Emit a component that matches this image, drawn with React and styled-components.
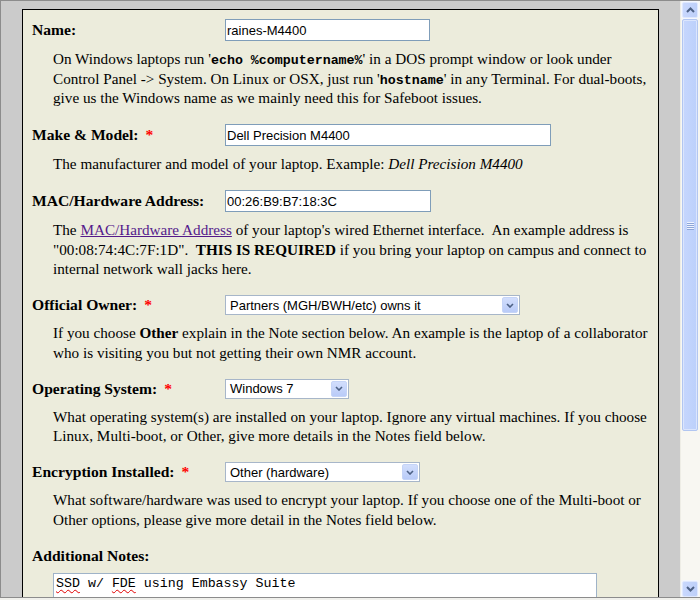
import React from "react";
import styled, { createGlobalStyle } from "styled-components";

const Global = createGlobalStyle`
  html, body { margin: 0; padding: 0; background: #f0f0ec; }
  body { font-family: "Liberation Serif", "Times New Roman", serif; font-size: 15.2px; color: #000; }
  * { box-sizing: border-box; }
`;

const Window = styled.div`
  display: flex;
  width: 700px;
  height: 598px;
  border-top: 1px solid #8c8c8c;
  border-left: 1px solid #8c8c8c;
  border-bottom: 1px solid #8c8c8c;
  overflow: hidden;
`;

const Viewport = styled.div`
  flex: 1;
  background: #cbcbcb;
  padding: 8px 21px 0 21px;
  overflow: hidden;
`;

const Panel = styled.div`
  width: 637px;
  border: 1px solid #000;
  background: #ececdc;
  padding: 9px 9px 60px 9px;
`;

const Field = styled.div`
  margin-bottom: 16.5px;
`;

const FieldHead = styled.div`
  display: flex;
  align-items: center;
  min-height: 20px;
`;

const Label = styled.div`
  width: 193px;
  flex: none;
  font-weight: bold;
  font-size: 15.6px;
  line-height: 20px;
  white-space: nowrap;
`;

const Star = styled.span`
  color: #ff0000;
  margin-left: 7px;
`;

const Desc = styled.div`
  margin: 8px 0 0 21px;
  line-height: 19.5px;
`;

const Code = styled.code`
  font-family: "Liberation Mono", "Courier New", monospace;
  font-size: 13.3px;
  font-weight: bold;
  line-height: 1;
`;

const Link = styled.a`
  color: #551a8b;
  text-decoration: underline;
`;

const TextInput = styled.input`
  width: ${(p) => p.$w}px;
  height: 22px;
  border: 1px solid #7f9db9;
  background: #fff;
  padding: 0 1px;
  margin: 0;
  font-family: "Liberation Sans", Arial, sans-serif;
  font-size: 13px;
  color: #000;
  outline: none;
`;

const SelectBox = styled.div`
  display: flex;
  align-items: center;
  width: ${(p) => p.$w}px;
  height: 20px;
  border: 1px solid #a7b6c9;
  background: #fff;
  padding: 1px;
`;

const SelectValue = styled.span`
  flex: 1;
  padding-left: 3px;
  font-family: "Liberation Sans", Arial, sans-serif;
  font-size: 13px;
  white-space: nowrap;
  overflow: hidden;
`;

const ArrowButton = styled.span`
  width: 16px;
  height: 16px;
  flex: none;
  display: flex;
  align-items: center;
  justify-content: center;
  border-radius: 2px;
  background: linear-gradient(#d2defc, #b9cbf8);
  border: 1px solid #c5d4f7;
`;

const NotesBox = styled.div`
  margin: 7.5px 0 0 21px;
  width: 544px;
  height: 70px;
  border: 1px solid #9fb3c8;
  background: #fff;
  padding: 2px 2px;
  font-family: "Liberation Mono", "Courier New", monospace;
  font-size: 13.3px;
  line-height: 15px;
  white-space: pre;
`;

const Misspelled = styled.span`
  text-decoration: underline wavy #e00000;
  text-decoration-thickness: 1px;
  text-underline-offset: 2px;
`;

const Scrollbar = styled.div`
  width: 20px;
  flex: none;
  display: flex;
  flex-direction: column;
  gap: 1px;
  padding: 1px 2px 0 1px;
  background: #f8f7f2;
  border-left: 1px solid #eeede6;
`;

const ScrollButton = styled.div`
  height: 16px;
  flex: none;
  display: flex;
  align-items: center;
  justify-content: center;
  border-radius: 2px;
  background: linear-gradient(90deg, #c9d8fd, #bdcff9);
  border: 1px solid #dfe8fe;
  box-shadow: 0 0 0 1px #f4f7fe;
`;

const Thumb = styled.div`
  height: 412px;
  flex: none;
  display: flex;
  flex-direction: column;
  align-items: center;
  justify-content: center;
  gap: 1px;
  border-radius: 2px;
  background: linear-gradient(90deg, #c6d6fd, #bcd0fb);
  border: 1px solid #b2c6f1;
  box-shadow: inset 0 0 0 1px #dbe5fd;
`;

const Grip = styled.span`
  width: 7px;
  height: 1px;
  background: #eef3ff;
  box-shadow: 0 1px 0 #8da6d8;
`;

const Spacer = styled.div`
  flex: 1;
`;

const Chevron = ({ up }) => (
  <svg width="9" height="6" viewBox="0 0 9 6">
    <polyline
      points={up ? "1,5 4.5,1.5 8,5" : "1,1 4.5,4.5 8,1"}
      fill="none"
      stroke="#4d6185"
      strokeWidth="2"
    />
  </svg>
);

const SmallChevron = () => (
  <svg width="8" height="5" viewBox="0 0 8 5">
    <polyline points="1,1 4,4 7,1" fill="none" stroke="#4d6185" strokeWidth="1.6" />
  </svg>
);

const Select = ({ w, value }) => (
  <SelectBox $w={w}>
    <SelectValue>{value}</SelectValue>
    <ArrowButton>
      <SmallChevron />
    </ArrowButton>
  </SelectBox>
);

const fields = [
  {
    label: "Name:",
    control: <TextInput $w={205} defaultValue="raines-M4400" />,
    desc: (
      <>
        On Windows laptops run '<Code>echo %computername%</Code>' in a DOS prompt window or look under
        Control Panel -&gt; System. On Linux or OSX, just run '<Code>hostname</Code>' in any Terminal. For
        dual-boots, give us the Windows name as we mainly need this for Safeboot issues.
      </>
    ),
  },
  {
    label: "Make & Model:",
    req: true,
    control: <TextInput $w={326} defaultValue="Dell Precision M4400" />,
    desc: (
      <>
        The manufacturer and model of your laptop. Example: <i>Dell Precision M4400</i>
      </>
    ),
  },
  {
    label: "MAC/Hardware Address:",
    control: <TextInput $w={206} defaultValue="00:26:B9:B7:18:3C" />,
    desc: (
      <>
        The <Link href="#">MAC/Hardware Address</Link> of your laptop's wired Ethernet interface.&nbsp; An example
        address is "00:08:74:4C:7F:1D".&nbsp; <b>THIS IS REQUIRED</b> if you bring your laptop on campus and
        connect to internal network wall jacks here.
      </>
    ),
  },
  {
    label: "Official Owner:",
    req: true,
    control: <Select w={295} value="Partners (MGH/BWH/etc) owns it" />,
    desc: (
      <>
        If you choose <b>Other</b> explain in the Note section below. An example is the laptop of a collaborator
        who is visiting you but not getting their own NMR account.
      </>
    ),
  },
  {
    label: "Operating System:",
    req: true,
    control: <Select w={124} value="Windows 7" />,
    desc: (
      <>
        What operating system(s) are installed on your laptop. Ignore any virtual machines. If you choose Linux,
        Multi-boot, or Other, give more details in the Notes field below.
      </>
    ),
  },
  {
    label: "Encryption Installed:",
    req: true,
    control: <Select w={195} value="Other (hardware)" />,
    desc: (
      <>
        What software/hardware was used to encrypt your laptop. If you choose one of the Multi-boot or Other
        options, please give more detail in the Notes field below.
      </>
    ),
  },
];

export default function App() {
  return (
    <>
      <Global />
      <Window>
        <Viewport>
          <Panel>
            {fields.map((f) => (
              <Field key={f.label}>
                <FieldHead>
                  <Label>
                    {f.label}
                    {f.req && <Star>*</Star>}
                  </Label>
                  {f.control}
                </FieldHead>
                <Desc>{f.desc}</Desc>
              </Field>
            ))}
            <Field>
              <FieldHead>
                <Label>Additional Notes:</Label>
              </FieldHead>
              <NotesBox>
                <Misspelled>SSD</Misspelled> w/ <Misspelled>FDE</Misspelled> using Embassy Suite
              </NotesBox>
            </Field>
          </Panel>
        </Viewport>
        <Scrollbar>
          <ScrollButton>
            <Chevron up />
          </ScrollButton>
          <Thumb>
            <Grip />
            <Grip />
            <Grip />
            <Grip />
          </Thumb>
          <Spacer />
          <ScrollButton>
            <Chevron />
          </ScrollButton>
        </Scrollbar>
      </Window>
    </>
  );
}
